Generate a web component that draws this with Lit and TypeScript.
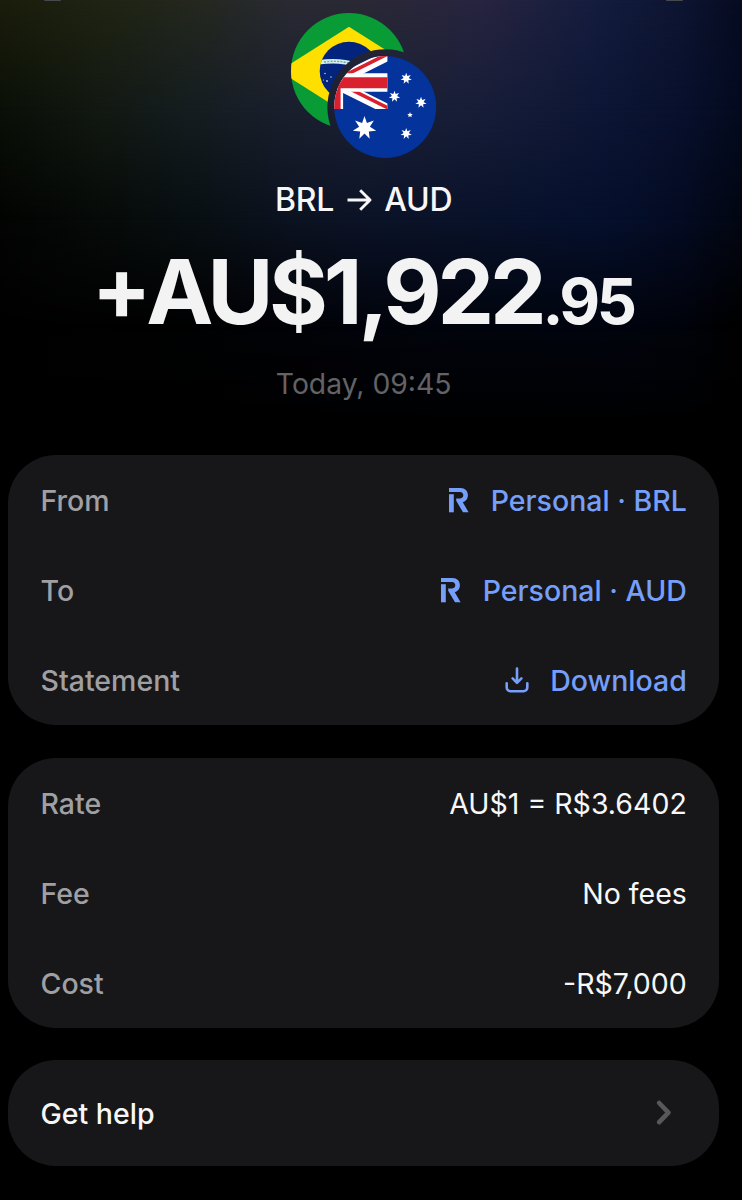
import { LitElement, html, css, svg, nothing } from "lit";
import { customElement } from "lit/decorators.js";

const star = (cx: number, cy: number, r: number, inner = 0.46, points = 7) => {
  const pts: string[] = [];
  for (let i = 0; i < points * 2; i++) {
    const a = (Math.PI * i) / points - Math.PI / 2;
    const k = i % 2 ? r * inner : r;
    pts.push(`${(cx + k * Math.cos(a)).toFixed(2)},${(cy + k * Math.sin(a)).toFixed(2)}`);
  }
  return svg`<polygon points=${pts.join(" ")} fill="#fff"></polygon>`;
};

const flags = html`
  <svg class="flags" width="146" height="146" viewBox="0 0 146 146">
    <defs>
      <mask id="cut">
        <rect width="146" height="146" fill="#fff" />
        <circle cx="94.4" cy="94.2" r="58" fill="#000" />
      </mask>
      <clipPath id="br"><circle cx="58" cy="58" r="58" /></clipPath>
      <clipPath id="globe"><circle cx="58" cy="58" r="29.3" /></clipPath>
      <clipPath id="au"><circle cx="94.2" cy="94" r="51" /></clipPath>
      <clipPath id="canton"><rect x="-11" y="42.7" width="107.4" height="53.4" /></clipPath>
    </defs>
    <g mask="url(#cut)">
      <g clip-path="url(#br)">
        <rect width="116" height="116" fill="#089b36" />
        <polygon points="-12,58 58,13.7 128,58 58,102.3" fill="#fedf00" />
        <circle cx="58" cy="58" r="29.3" fill="#03247c" />
        <g clip-path="url(#globe)" fill="none">
          <path d="M26 49.5Q48 46 66 52T92 69" stroke="#d5eef0" stroke-width="4.6" />
          <path d="M33 49Q48 46.8 64 51.6" stroke="#5fae9a" stroke-width="1.4" stroke-dasharray="2 1.3" />
        </g>
        <g fill="#b9c9e6">
          <circle cx="34" cy="60.5" r=".8" /><circle cx="40" cy="64" r=".8" />
          <circle cx="36" cy="68" r="1" /><circle cx="32.5" cy="67" r=".6" />
          <circle cx="47" cy="65" r=".8" /><circle cx="43" cy="70" r=".6" />
        </g>
      </g>
    </g>
    <g clip-path="url(#au)">
      <rect x="42" y="42" width="104" height="104" fill="#03339b" />
      <g clip-path="url(#canton)">
        <path d="M42.8 69.5L96.4 42.7M42.8 69.5L96.4 96.2" stroke="#fff" stroke-width="10.4" />
        <path d="M42.8 67.9L96.4 41.1M42.8 67.9L96.4 94.6" stroke="#d8202f" stroke-width="3.6" />
        <path d="M42.8 42V97M42 69.5H97" stroke="#fff" stroke-width="18.6" />
        <path d="M42.8 42V97" stroke="#d8202f" stroke-width="13.6" />
        <path d="M42 69.7H97" stroke="#d8202f" stroke-width="11" />
      </g>
      ${star(73.5, 115, 12)}
      ${star(115.2, 65.5, 5.8)}
      ${star(103.5, 83.5, 5.8)}
      ${star(130, 89.5, 5.8)}
      ${star(119, 102, 2.9, 0.46, 5)}
      ${star(115.2, 120.7, 5.8)}
    </g>
  </svg>
`;

const brandIcon = html`
  <svg class="brand" width="20" height="25" viewBox="0 0 20 25" fill="currentColor">
    <path d="M0 6.2H4.8V24.3H0Z" />
    <path d="M0 0H11.6C16 0 18.9 3 18.9 7.2C18.9 10.7 16.9 13.4 13.8 14.3L19.6 24.3H14L7.2 12.7V10.4H11.2C13 10.4 14.3 9.1 14.3 7.3C14.3 5.4 13 4.1 11.2 4.1H0Z" />
  </svg>
`;

const downloadIcon = html`
  <svg class="download" width="24" height="26" viewBox="0 0 24 26" fill="none" stroke="currentColor"
    stroke-width="2.6" stroke-linecap="round" stroke-linejoin="round">
    <path d="M12 1.6V15.4M7.6 11.4L12 15.8L16.4 11.4" />
    <path d="M1.7 16.2V20.4A3.8 3.8 0 0 0 5.5 24.2H18.5A3.8 3.8 0 0 0 22.3 20.4V16.2" />
  </svg>
`;

@customElement("app-root")
export class AppRoot extends LitElement {
  static styles = css`
    :host {
      display: block;
      height: 1200px;
      overflow: hidden;
      background: #000;
      color: #f7f7f8;
      font-family: Inter, sans-serif;
    }
    .page {
      display: grid;
      height: 1200px;
      background: #000;
    }
    .glow,
    .content {
      grid-area: 1 / 1;
    }
    .glow {
      height: 440px;
    }
    .g4 {
      background: linear-gradient(90deg, #000 0, #000102 200px, #010206 290px, #01030a 370px, #01040c 480px, #01040e 600px, #01030a 680px, #000 742px);
      mask-image: linear-gradient(180deg, #000 330px, transparent 430px);
    }
    .g3 {
      background: linear-gradient(90deg, #020302 0, #060a08 100px, #080f13 200px, #0b1220 290px, #0b1327 370px, #09122a 480px, #05102d 600px, #040b22 680px, #020611 742px);
      mask-image: linear-gradient(180deg, #000 220px, transparent 330px);
    }
    .g2 {
      background: linear-gradient(90deg, #0a1007 0, #121912 100px, #151d21 200px, #1a1f2e 290px, #1b2034 370px, #171d38 480px, #0d1635 600px, #08102d 680px, #040a1e 742px);
      mask-image: linear-gradient(180deg, #000 110px, transparent 220px);
    }
    .g1 {
      background: linear-gradient(90deg, #1b1d0b 0, #1f2313 100px, #24281f 200px, #292a32 290px, #2a2835 370px, #27243f 480px, #141c3e 600px, #0d1531 680px, #060b20 742px);
      mask-image: linear-gradient(180deg, #000 0, transparent 110px);
    }
    .content {
      display: flex;
      flex-direction: column;
      box-sizing: border-box;
      padding: 0 22.7px 0 8px;
      z-index: 1;
    }
    .nav {
      display: flex;
      justify-content: space-between;
      height: 1px;
      padding: 0 36px;
    }
    .nav span {
      width: 17px;
      border-radius: 0 0 8px 8px;
      background: #48494c;
    }
    .hero {
      display: flex;
      flex-direction: column;
      align-items: center;
      height: 454.3px;
      box-sizing: border-box;
      padding-top: 11.8px;
    }
    .flags {
      display: block;
      flex: none;
    }
    .pair {
      display: flex;
      align-items: center;
      margin-top: 21px;
      height: 40px;
      font-size: 32px;
      line-height: 40px;
      font-weight: 450;
      letter-spacing: -0.2px;
    }
    .pair svg {
      margin: 0 12px 0 13px;
    }
    .amount {
      margin-top: 17px;
      height: 110px;
      line-height: 110px;
      font-size: 90px;
      font-weight: 650;
      letter-spacing: -4.2px;
      white-space: nowrap;
      color: #f3f3f4;
      padding-right: 2px;
    }
    .plus {
      display: inline-block;
      font-size: 88px;
      transform: translateY(-4.5px);
      letter-spacing: -5.2px;
    }
    .cents {
      font-size: 63px;
      letter-spacing: -3.4px;
    }
    .when {
      margin-top: 18.8px;
      line-height: 36px;
      font-size: 28.3px;
      color: #636366;
    }
    .card {
      display: flex;
      flex-direction: column;
      flex: none;
      border-radius: 48px;
      background: #171719;
      margin-bottom: 32.3px;
      padding: 0 32.5px;
      font-size: 28.5px;
      line-height: 36px;
    }
    .row {
      display: flex;
      align-items: center;
      justify-content: space-between;
      height: 90px;
      box-sizing: border-box;
      padding-top: 2px;
    }
    .label {
      font-weight: 500;
      color: #a0a0a3;
    }
    .value {
      display: flex;
      align-items: center;
    }
    .link {
      color: #759ffb;
      font-weight: 500;
    }
    .brand {
      margin: 0 21.5px 2px 0;
    }
    .download {
      margin: 0 21px 2px 0;
    }
    .help {
      height: 106px;
      font-weight: 500;
      color: #f7f7f8;
    }
    .chevron {
      margin: 0 15px 2px 0;
    }
  `;

  private row(label: string, value: string, icon: unknown = nothing) {
    return html`
      <div class="row">
        <span class="label">${label}</span>
        <span class="value ${icon === nothing ? "" : "link"}">${icon}<span>${value}</span></span>
      </div>
    `;
  }

  render() {
    return html`
      <main class="page">
        <div class="glow g4"></div>
        <div class="glow g3"></div>
        <div class="glow g2"></div>
        <div class="glow g1"></div>
        <div class="content">
          <div class="nav"><span></span><span></span></div>
          <section class="hero">
            ${flags}
            <div class="pair">
              <span>BRL</span>
              <svg width="25" height="22" viewBox="0 0 25 22" fill="none" stroke="currentColor" stroke-width="2.9">
                <path d="M.5 11H23M13.2 1.3L23 11L13.2 20.7" stroke-linejoin="round" />
              </svg>
              <span>AUD</span>
            </div>
            <div class="amount"><span class="plus">+</span>AU$1,922<span class="cents">.95</span></div>
            <div class="when">Today, 09:45</div>
          </section>
          <section class="card">
            ${this.row("From", "Personal · BRL", brandIcon)}
            ${this.row("To", "Personal · AUD", brandIcon)}
            ${this.row("Statement", "Download", downloadIcon)}
          </section>
          <section class="card">
            ${this.row("Rate", "AU$1 = R$3.6402")}
            ${this.row("Fee", "No fees")}
            ${this.row("Cost", "-R$7,000")}
          </section>
          <section class="card">
            <div class="row help">
              <span>Get help</span>
              <svg class="chevron" width="16" height="26" viewBox="0 0 16 26" fill="none" stroke="#58585b"
                stroke-width="4.6" stroke-linecap="round" stroke-linejoin="round">
                <path d="M3.2 3L12.4 12.6L3.2 22.2" />
              </svg>
            </div>
          </section>
        </div>
      </main>
    `;
  }
}
